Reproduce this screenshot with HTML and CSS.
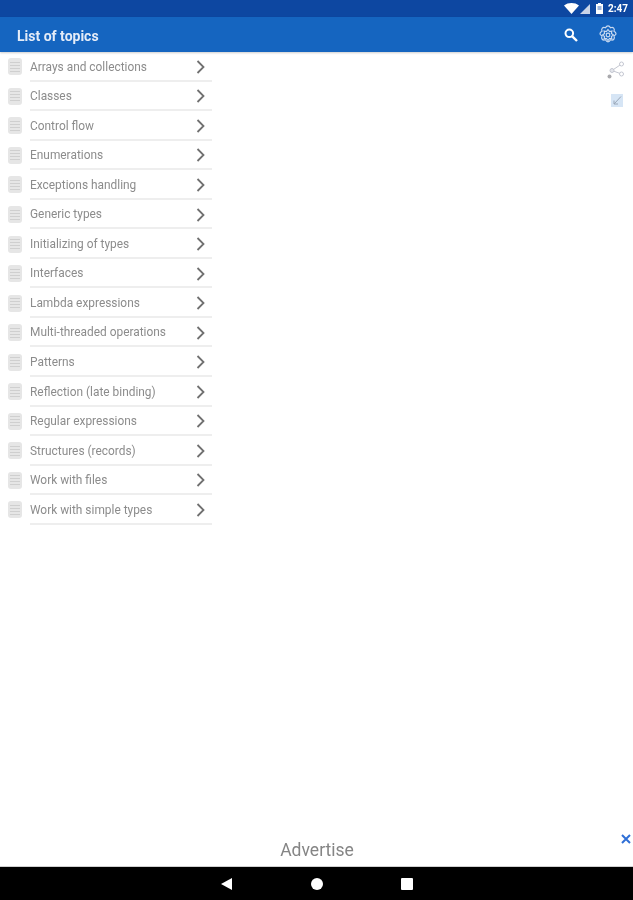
FILE: index.html
```html
<!DOCTYPE html>
<html lang="en">
<head>
<meta charset="utf-8">
<title>List of topics</title>
<link rel="stylesheet" href="styles.css">
</head>
<body>
<div class="app">
  <div class="statusbar">
    <svg class="st-wifi" width="15" height="11" viewBox="0 0 15 11"><path d="M0 2.500C4-.8 11-.8 15 2.500L7.500 11z" fill="#fff"/></svg>
    <svg class="st-signal" width="10" height="10" viewBox="0 0 10 10"><path d="M0 10L10 0v10z" fill="#c9d4e8"/></svg>
    <svg class="st-batt" width="7" height="11" viewBox="0 0 7 11"><path d="M2 0h3v1h2v10H0V1h2z" fill="#fff"/><rect x="1.500" y="3" width="4" height="4" fill="#9fb6dc"/></svg>
    <span class="st-time">2:47</span>
  </div>
  <header class="toolbar">
    <h1 class="title">List of topics</h1>
    <svg class="ic-search" width="16" height="16" viewBox="0 0 16 16"><circle cx="6.300" cy="6.300" r="3.800" fill="none" stroke="#fff" stroke-width="2"/><path d="M9.300 9.300L14 14" stroke="#fff" stroke-width="2.400"/></svg>
    <svg class="ic-gear" width="20" height="20" viewBox="0 0 20 20"><g fill="none" stroke="#c8d9f0" stroke-width="1.200"><path d="M10 .8c1.300 0 2 1 2.500 2 1.100-.4 2.300-.6 3.200.3s.7 2.100.3 3.200c1 .5 2 1.200 2 2.500s-1 1.500-2 2c.4 1.100.6 2.800-.3 3.700s-2.100.7-3.200.3c-.5 1-1.200 2-2.500 2s-2-1-2.500-2c-1.100.4-2.300.6-3.200-.3s-.7-2.600-.3-3.700c-1-.5-2-.7-2-2s1-2 2-2.500c-.4-1.100-.6-2.300.3-3.200s2.100-.7 3.200-.3c.5-1 1.200-2 2.500-2z"/><path d="M10 4.500l1.600 2.100 2.300-.5-.5 2.300L15.500 10l-2.100 1.600.5 2.300-2.300-.5L10 15.500l-1.600-2.100-2.300.5.5-2.300L4.500 10l2.100-1.600-.5-2.300 2.300.5z"/><circle cx="10" cy="10" r="1.800"/></g></svg>
  </header>
  <main class="content">
    <ul class="topics">
      <li class="topic"><span class="doc"></span><span class="name">Arrays and collections</span><svg class="chev" width="10" height="14" viewBox="0 0 10 14"><path d="M1.500 1l6 6-6 6" fill="none" stroke="#707070" stroke-width="1.800"/></svg></li>
      <li class="topic"><span class="doc"></span><span class="name">Classes</span><svg class="chev" width="10" height="14" viewBox="0 0 10 14"><path d="M1.500 1l6 6-6 6" fill="none" stroke="#707070" stroke-width="1.800"/></svg></li>
      <li class="topic"><span class="doc"></span><span class="name">Control flow</span><svg class="chev" width="10" height="14" viewBox="0 0 10 14"><path d="M1.500 1l6 6-6 6" fill="none" stroke="#707070" stroke-width="1.800"/></svg></li>
      <li class="topic"><span class="doc"></span><span class="name">Enumerations</span><svg class="chev" width="10" height="14" viewBox="0 0 10 14"><path d="M1.500 1l6 6-6 6" fill="none" stroke="#707070" stroke-width="1.800"/></svg></li>
      <li class="topic"><span class="doc"></span><span class="name">Exceptions handling</span><svg class="chev" width="10" height="14" viewBox="0 0 10 14"><path d="M1.500 1l6 6-6 6" fill="none" stroke="#707070" stroke-width="1.800"/></svg></li>
      <li class="topic"><span class="doc"></span><span class="name">Generic types</span><svg class="chev" width="10" height="14" viewBox="0 0 10 14"><path d="M1.500 1l6 6-6 6" fill="none" stroke="#707070" stroke-width="1.800"/></svg></li>
      <li class="topic"><span class="doc"></span><span class="name">Initializing of types</span><svg class="chev" width="10" height="14" viewBox="0 0 10 14"><path d="M1.500 1l6 6-6 6" fill="none" stroke="#707070" stroke-width="1.800"/></svg></li>
      <li class="topic"><span class="doc"></span><span class="name">Interfaces</span><svg class="chev" width="10" height="14" viewBox="0 0 10 14"><path d="M1.500 1l6 6-6 6" fill="none" stroke="#707070" stroke-width="1.800"/></svg></li>
      <li class="topic"><span class="doc"></span><span class="name">Lambda expressions</span><svg class="chev" width="10" height="14" viewBox="0 0 10 14"><path d="M1.500 1l6 6-6 6" fill="none" stroke="#707070" stroke-width="1.800"/></svg></li>
      <li class="topic"><span class="doc"></span><span class="name">Multi-threaded operations</span><svg class="chev" width="10" height="14" viewBox="0 0 10 14"><path d="M1.500 1l6 6-6 6" fill="none" stroke="#707070" stroke-width="1.800"/></svg></li>
      <li class="topic"><span class="doc"></span><span class="name">Patterns</span><svg class="chev" width="10" height="14" viewBox="0 0 10 14"><path d="M1.500 1l6 6-6 6" fill="none" stroke="#707070" stroke-width="1.800"/></svg></li>
      <li class="topic"><span class="doc"></span><span class="name">Reflection (late binding)</span><svg class="chev" width="10" height="14" viewBox="0 0 10 14"><path d="M1.500 1l6 6-6 6" fill="none" stroke="#707070" stroke-width="1.800"/></svg></li>
      <li class="topic"><span class="doc"></span><span class="name">Regular expressions</span><svg class="chev" width="10" height="14" viewBox="0 0 10 14"><path d="M1.500 1l6 6-6 6" fill="none" stroke="#707070" stroke-width="1.800"/></svg></li>
      <li class="topic"><span class="doc"></span><span class="name">Structures (records)</span><svg class="chev" width="10" height="14" viewBox="0 0 10 14"><path d="M1.500 1l6 6-6 6" fill="none" stroke="#707070" stroke-width="1.800"/></svg></li>
      <li class="topic"><span class="doc"></span><span class="name">Work with files</span><svg class="chev" width="10" height="14" viewBox="0 0 10 14"><path d="M1.500 1l6 6-6 6" fill="none" stroke="#707070" stroke-width="1.800"/></svg></li>
      <li class="topic"><span class="doc"></span><span class="name">Work with simple types</span><svg class="chev" width="10" height="14" viewBox="0 0 10 14"><path d="M1.500 1l6 6-6 6" fill="none" stroke="#707070" stroke-width="1.800"/></svg></li>
    </ul>
    <aside class="tools">
      <svg width="18" height="18" viewBox="0 0 18 18"><g fill="none" stroke="#c3c6d0" stroke-width="1"><path d="M5 9.500L14.500 3M5 9.500l9.500 3.500"/><circle cx="14.500" cy="3" r="2" fill="#fff"/><circle cx="14.500" cy="13" r="2" fill="#fff"/><circle cx="5" cy="9.500" r="2" fill="#e4e6ec"/></g><circle cx="2.500" cy="15.500" r="2" fill="#a9a9ad"/></svg>
      <svg class="tool-check" width="12" height="13" viewBox="0 0 12 13"><rect width="12" height="13" fill="#d6e5f5"/><path d="M3 10L10 2.500M3 10V6.500M3 10h4" fill="none" stroke="#9aa7b8" stroke-width="1"/></svg>
    </aside>
  </main>
  <footer class="ad">
    <span class="ad-label">Advertise</span>
    <svg class="ad-close" width="10" height="10" viewBox="0 0 10 10"><path d="M1 1l8 8M9 1l-8 8" stroke="#2f6fd6" stroke-width="2"/></svg>
  </footer>
  <nav class="navbar">
    <svg width="11" height="12" viewBox="0 0 11 12"><path d="M0 6l11-6v12z" fill="#fff"/></svg>
    <svg class="nav-home" width="12" height="12" viewBox="0 0 12 12"><circle cx="6" cy="6" r="6" fill="#fff"/></svg>
    <svg width="12" height="12" viewBox="0 0 12 12"><rect width="12" height="12" rx="1" fill="#fff"/></svg>
  </nav>
</div>
</body>
</html>
```

FILE: styles.css
```css
* { box-sizing: border-box; }
html, body { margin: 0; padding: 0; }
body { background: #fff; font-family: Roboto, "Liberation Sans", sans-serif; }
.app { width: 633px; height: 900px; display: flex; flex-direction: column; overflow: hidden; filter: blur(.45px); }
.statusbar { height: 17px; flex: none; background: #0d47a1; display: flex; align-items: center; justify-content: flex-end; padding-right: 5px; color: #fff; }
.st-wifi { margin-right: 1px; }
.st-signal { margin-right: 6px; }
.st-batt { margin-right: 5px; }
.st-time { font-size: 10px; font-weight: 700; line-height: 17px; width: 20px; }
.toolbar { height: 35px; flex: none; background: #1565c0; display: flex; align-items: center; padding: 0 15px 0 17px; box-shadow: 0 1px 2px rgba(0,0,0,.2); position: relative; }
.title { margin: 0; flex: 1; font-size: 14px; font-weight: 700; color: #e4ecf8; padding-top: 2px; }
.ic-search { margin-right: 19px; }
.content { flex: 1; display: flex; justify-content: space-between; min-height: 0; }
.topics { list-style: none; margin: 0; padding: 0; width: 212px; }
.topic { height: 29.550px; display: flex; align-items: center; position: relative; padding-left: 8px; }
.topic::after { content: ""; position: absolute; left: 30px; right: 0; bottom: 0; height: 2px; background: #eeeeee; }
.doc { width: 14px; height: 17px; border-radius: 3px; flex: none; margin-right: 8px; background: #e6e6e6 repeating-linear-gradient(#cfcfcf 0 1px, transparent 1px 3px) center / 10px 10px no-repeat; }
.name { flex: 1; font-size: 11.900px; color: #8c8c8c; white-space: nowrap; padding-bottom: .5px; }
.chev { flex: none; margin-right: 6px; }
.tools { display: flex; flex-direction: column; align-items: center; gap: 15px; padding: 9px 1px 0 0; width: 34px; }
.tool-check { margin-left: 3px; }
.ad { height: 47px; flex: none; display: flex; align-items: center; justify-content: center; position: relative; padding: 13px 0 0 1px; border-bottom: 1px solid #d0d0d0; }
.ad-label { font-size: 17.500px; color: #858585; }
.ad-close { position: absolute; right: 2px; top: 14px; }
.navbar { height: 33px; flex: none; background: #000; display: flex; align-items: center; justify-content: center; gap: 78px; padding-left: 1px; }
.nav-home { margin-left: 1px; }
```
